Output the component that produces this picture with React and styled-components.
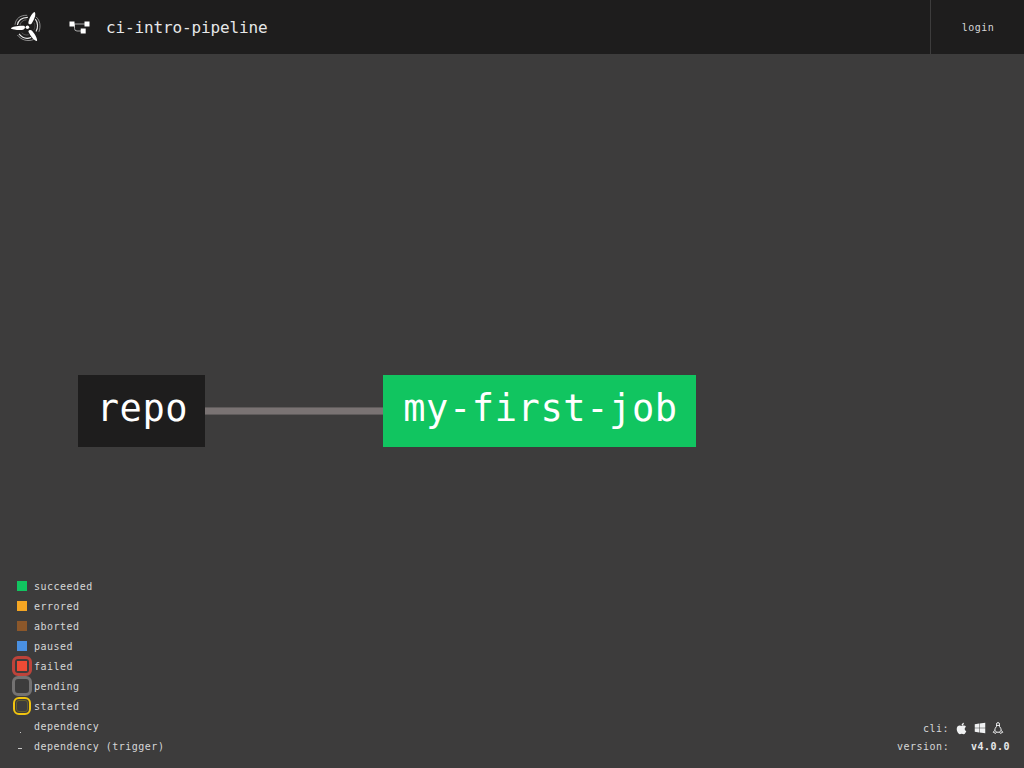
import React from "react";
import styled, { createGlobalStyle } from "styled-components";
import { FaApple, FaWindows } from "react-icons/fa";

const GlobalStyle = createGlobalStyle`
  * { box-sizing: border-box; }
  body { margin: 0; background: #3d3c3c; font-family: "DejaVu Sans Mono", monospace; }
`;

const Page = styled.div`
  display: flex;
  flex-direction: column;
  height: 100vh;
  overflow: hidden;
  background: #3d3c3c;
  color: #e6e7e8;
`;

const TopBar = styled.header`
  display: flex;
  flex: 0 0 54px;
  background: #1e1d1d;
`;

const LogoLink = styled.div`
  width: 54px;
  height: 54px;
`;

const PipelineCrumb = styled.div`
  display: flex;
  align-items: center;
  flex: 1;
  padding-left: 15px;
`;

const PipelineName = styled.h1`
  margin: 2px 0 0 16px;
  font-size: 16px;
  line-height: 20px;
  font-weight: 400;
  letter-spacing: -0.13px;
`;

const Login = styled.div`
  display: flex;
  align-items: center;
  justify-content: center;
  width: 94px;
  border-left: 1px solid #3d3c3c;
  padding-left: 1px;
  font-size: 10px;
  letter-spacing: 0.5px;
  color: #d6d7d8;
`;

const Graph = styled.main`
  display: flex;
  align-items: center;
  height: 72px;
  margin: 321px 0 0 78px;
`;

const Node = styled.div`
  width: ${(p) => p.$width}px;
  height: 72px;
  padding: 12px 0 0 2px;
  text-align: center;
  color: #fff;
  background: ${(p) => p.$color};
  font-size: 37px;
  letter-spacing: 0.6px;
  line-height: 43px;
`;

const Edge = styled.div`
  width: 178px;
  height: 8px;
  background: #7a7373;
  border: solid #5f5b5b;
  border-width: 1px 0;
`;

const Footer = styled.footer`
  display: flex;
  justify-content: space-between;
  align-items: flex-end;
  margin-top: auto;
  padding: 0 14px 12px 12px;
  font-size: 10px;
  letter-spacing: 0.5px;
  color: #d6d7d8;
`;

const Legend = styled.dl`
  margin: 0;
`;

const LegendRow = styled.div`
  display: flex;
  align-items: center;
  height: 20px;
`;

const Mark = styled.dt`
  flex: 0 0 20px;
  display: flex;
  justify-content: center;
`;

const Label = styled.dd`
  margin: 0 0 0 2px;
  white-space: nowrap;
`;

const Square = styled.span`
  width: 10px;
  height: 10px;
  background: ${(p) => p.$color};
`;

const Ring = styled.span`
  display: flex;
  align-items: center;
  justify-content: center;
  width: ${(p) => p.$size}px;
  height: ${(p) => p.$size}px;
  border: ${(p) => p.$stroke}px solid ${(p) => p.$color};
  border-radius: 6px;
`;

const StartedCore = styled.span`
  width: 12px;
  height: 12px;
  border: 1px solid #68602c;
  border-radius: 3px;
`;

const Dash = styled.span`
  width: ${(p) => p.$width}px;
  height: 1px;
  margin: ${(p) => p.$top}px 4px 0 0;
  background: #c8c8c8;
`;

const Info = styled.div`
  width: 113px;
`;

const InfoRow = styled.div`
  display: flex;
  align-items: center;
  height: ${(p) => p.$height}px;
`;

const InfoLabel = styled.span`
  width: 53px;
`;

const CliLabel = styled(InfoLabel)`
  padding-left: 26px;
`;

const CliLinks = styled.div`
  display: flex;
  align-items: center;
  margin-left: 2px;
  color: #f0f1f2;
`;

const CliIcon = styled.span`
  display: flex;
  justify-content: center;
  width: 18.4px;
`;

const Version = styled.strong`
  margin-left: auto;
  font-weight: 700;
  color: #e6e7e8;
`;

const Logo = () => (
  <svg width="54" height="54" viewBox="0 0 54 54" fill="#fff">
    <circle cx="27.4" cy="27.3" r="1.8" />
    <path d="M28.4 22.5 C29 18.5 31.8 13 34.6 11.9 C36.2 13.8 35 18 31.7 23.4 C30.4 25 28 24.4 28.4 22.5 Z" />
    <path d="M25 27.2 C25 29.4 23 30 20 30 C16 30 11.4 29.3 10.9 28.2 C12 26.7 17 26 22 25.8 C24 25.7 25 26.1 25 27.2 Z" />
    <path d="M28.9 30.5 C31 29 32.4 31 34.2 33.6 C36 36.4 37.3 39 37.1 41 C34.8 41.3 31.5 37.6 29.4 33.6 C28.5 32 28 31 28.9 30.5 Z" />
    <g fill="none" stroke="#fff" strokeWidth="0.7">
      <path d="M15 24.8 C15.6 18.8 20 15.1 27.2 15.3" opacity=".7" />
      <path d="M17.4 25 C18 20.8 21.5 17.6 27.8 17.3" strokeWidth="1.2" opacity=".9" />
      <path d="M20 25 C20.7 21.8 23.4 19.8 26.5 19.8" opacity=".45" />
      <path d="M36 16.8 C40.2 20.5 41 26.4 38.9 31.8" opacity=".7" />
      <path d="M35.3 19.2 C38 22.5 38.3 27.7 36 31.5" strokeWidth="1.1" opacity=".9" />
      <path d="M34 22.5 C35.4 25.2 35 28 33.8 30" opacity=".25" />
      <path d="M17.4 35 C21 39.8 27.5 42 33.6 39.5" opacity=".7" />
      <path d="M19 33.9 C22 37.7 26.8 39.2 31.2 37.5" strokeWidth="1.1" opacity=".9" />
      <path d="M21.7 32.7 C23.5 34.7 26 35.6 28.7 34.7" opacity=".35" />
    </g>
  </svg>
);

const PipelineIcon = () => (
  <svg width="21" height="13" viewBox="0 0 21 13">
    <path d="M4 3 H17 M5.5 3 V7.5 Q5.5 10 8 10 H13" fill="none" stroke="#a9a9a9" strokeWidth="1" />
    <path d="M0.5 0.5h5v5h-5z M15.5 0.5h5v5h-5z M11.7 7.5h5v5h-5z" fill="#fff" />
  </svg>
);

const jobStatuses = [
  ["succeeded", "#11c560"],
  ["errored", "#f5a623"],
  ["aborted", "#8b572a"],
  ["paused", "#4a90e2"],
];

export default function App() {
  return (
    <Page>
      <GlobalStyle />
      <TopBar>
        <LogoLink><Logo /></LogoLink>
        <PipelineCrumb>
          <PipelineIcon />
          <PipelineName>ci-intro-pipeline</PipelineName>
        </PipelineCrumb>
        <Login>login</Login>
      </TopBar>
      <Graph>
        <Node $width={127} $color="#1e1d1d">repo</Node>
        <Edge />
        <Node $width={313} $color="#11c560">my-first-job</Node>
      </Graph>
      <Footer>
        <Legend>
          {jobStatuses.map(([name, color]) => (
            <LegendRow key={name}>
              <Mark><Square $color={color} /></Mark>
              <Label>{name}</Label>
            </LegendRow>
          ))}
          <LegendRow>
            <Mark><Ring $size={20} $stroke={3} $color="#bd433a"><Square $color="#ed4b35" /></Ring></Mark>
            <Label>failed</Label>
          </LegendRow>
          <LegendRow>
            <Mark><Ring $size={20} $stroke={3} $color="#747272" /></Mark>
            <Label>pending</Label>
          </LegendRow>
          <LegendRow>
            <Mark><Ring $size={18} $stroke={2} $color="#f1c40f"><StartedCore /></Ring></Mark>
            <Label>started</Label>
          </LegendRow>
          <LegendRow>
            <Mark><Dash $width={1} $top={12} /></Mark>
            <Label>dependency</Label>
          </LegendRow>
          <LegendRow>
            <Mark><Dash $width={4} $top={4} /></Mark>
            <Label>dependency (trigger)</Label>
          </LegendRow>
        </Legend>
        <Info>
          <InfoRow $height={16}>
            <CliLabel>cli:</CliLabel>
            <CliLinks>
              <CliIcon><FaApple size={13} /></CliIcon>
              <CliIcon><FaWindows size={12} /></CliIcon>
              <CliIcon>
                <svg width="12" height="12" viewBox="0 0 12 12" fill="none" stroke="currentColor" strokeWidth="1">
                  <path d="M4.5 4.4 V2.2 Q4.5 .6 6 .6 Q7.5 .6 7.5 2.2 V4.4 Q9.2 6.4 9.3 8.6 L10.8 10.2 L8.4 11.4 L7.6 10.2 H4.4 L3.6 11.4 L1.2 10.2 L2.7 8.6 Q2.8 6.4 4.5 4.4 Z" />
                  <path d="M5 3 L6 3.8 L7 3 M2.9 8.3 L4.5 10.2 M9.1 8.3 L7.5 10.2" />
                </svg>
              </CliIcon>
            </CliLinks>
          </InfoRow>
          <InfoRow $height={20}>
            <InfoLabel>version:</InfoLabel>
            <Version>v4.0.0</Version>
          </InfoRow>
        </Info>
      </Footer>
    </Page>
  );
}
